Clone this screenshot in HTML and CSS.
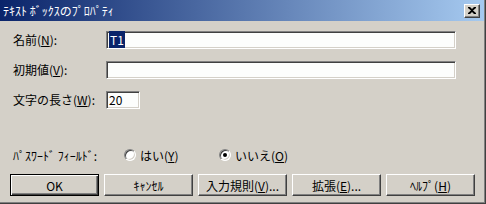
FILE: index.html
```html
<!DOCTYPE html>
<html lang="ja">
<head>
    <meta charset="UTF-8">
    <title>テキスト ボックスのプロパティ</title>
    <link rel="stylesheet" href="styles.css">
</head>
<body>
    <div class="window">
        <!-- title bar -->
        <div class="titlebar">
            <span class="title">ﾃｷｽﾄ ﾎﾞｯｸｽのﾌﾟﾛﾊﾟﾃｨ</span>
            <div class="close-btn">
                <svg width="8" height="7" viewBox="0 0 8 7">
                    <path d="M0 0h2l2 2 2-2h2v1l-3 2.5 3 2.5v1h-2l-2-2-2 2h-2v-1l3-2.5-3-2.5z" fill="#000"/>
                </svg>
            </div>
        </div>

        <!-- form -->
        <div class="content">
            <div class="row">
                <span class="label">名前(<u>N</u>):</span>
                <div class="field wide"><span class="selected">T1</span></div>
            </div>
            <div class="row">
                <span class="label">初期値(<u>V</u>):</span>
                <div class="field wide"></div>
            </div>
            <div class="row">
                <span class="label">文字の長さ(<u>W</u>):</span>
                <div class="field short">20</div>
            </div>

            <div class="radio-row">
                <span class="radio-label">ﾊﾟｽﾜｰﾄﾞ ﾌｨｰﾙﾄﾞ:</span>
                <div class="option">
                    <span class="radio"></span>
                    <span>はい(<u>Y</u>)</span>
                </div>
                <div class="option">
                    <span class="radio checked"></span>
                    <span>いいえ(<u>O</u>)</span>
                </div>
            </div>

            <div class="buttons">
                <div class="btn default">OK</div>
                <div class="btn">ｷｬﾝｾﾙ</div>
                <div class="btn">入力規則(<u>V</u>)...</div>
                <div class="btn">拡張(<u>E</u>)...</div>
                <div class="btn">ﾍﾙﾌﾟ(<u>H</u>)</div>
            </div>
        </div>
    </div>
</body>
</html>
```

FILE: styles.css
```css
* {
    margin: 0;
    padding: 0;
    box-sizing: border-box;
}

body {
    width: 486px;
    height: 204px;
    overflow: hidden;
    font-family: "Noto Sans CJK JP", "Liberation Sans", sans-serif;
    font-size: 12px;
    color: #000;
}

u {
    text-decoration: underline;
    text-underline-offset: 1px;
}

.window {
    width: 486px;
    height: 204px;
    background: #d4d0c8;
    border-right: 1px solid #404040;
    border-bottom: 1px solid #404040;
    display: flex;
    flex-direction: column;
}

/* Title bar */
.titlebar {
    height: 21px;
    display: flex;
    align-items: center;
    justify-content: space-between;
    padding: 0 4px 0 3px;
    background: linear-gradient(to right, #0a246a, #a6caf0);
    border-right: 1px solid #808080;
}

.title {
    color: #fff;
    line-height: 14px;
}

.close-btn {
    width: 16px;
    height: 14px;
    display: flex;
    align-items: center;
    justify-content: center;
    background: #d4d0c8;
    border: 1px solid;
    border-color: #fff #404040 #404040 #fff;
    box-shadow: inset -1px -1px #808080;
}

/* Form */
.content {
    flex: 1;
    padding-top: 10px;
    border-right: 1px solid #808080;
    border-bottom: 1px solid #808080;
}

.row {
    display: flex;
    align-items: center;
    height: 18px;
    margin-bottom: 12px;
    padding-left: 13px;
}

.label {
    width: 93px;
    line-height: 14px;
}

.field {
    height: 18px;
    background: #fcfdfc;
    border: 1px solid;
    border-color: #808080 #fff #fff #808080;
    box-shadow: inset 1px 1px #404040, inset -1px -1px #d4d0c8;
    padding: 1px 0 0 2px;
    line-height: 14px;
}

.field.wide {
    width: 350px;
}

.field.short {
    width: 34px;
}

.selected {
    background: #0a246a;
    color: #fff;
    padding: 0 1px;
}

/* margins of block siblings collapse, so this one carries the whole gap */
.radio-row {
    display: flex;
    align-items: center;
    height: 14px;
    margin-top: 39px;
    padding-left: 13px;
}

.radio-label {
    width: 111px;
}

.option {
    width: 95px;
    display: flex;
    align-items: center;
    gap: 4px;
}

.radio {
    width: 12px;
    height: 12px;
    border-radius: 50%;
    background: #fff;
    border: 1px solid;
    border-color: #808080 #fff #fff #808080;
    box-shadow: inset 1px 1px #404040, inset -1px -1px #d4d0c8;
    display: flex;
    align-items: center;
    justify-content: center;
}

.radio.checked::after {
    content: '';
    width: 4px;
    height: 4px;
    border-radius: 50%;
    background: #000;
}

/* Buttons */
.buttons {
    display: flex;
    gap: 5px;
    margin-top: 12px;
    padding-left: 10px;
}

.btn {
    width: 89px;
    height: 22px;
    display: flex;
    align-items: center;
    justify-content: center;
    background: #d4d0c8;
    border: 1px solid;
    border-color: #fff #404040 #404040 #fff;
    box-shadow: inset -1px -1px #808080;
}

.btn.default {
    border-color: #000;
    box-shadow: inset 1px 1px #fff, inset -1px -1px #404040, inset -2px -2px #808080;
}
```
